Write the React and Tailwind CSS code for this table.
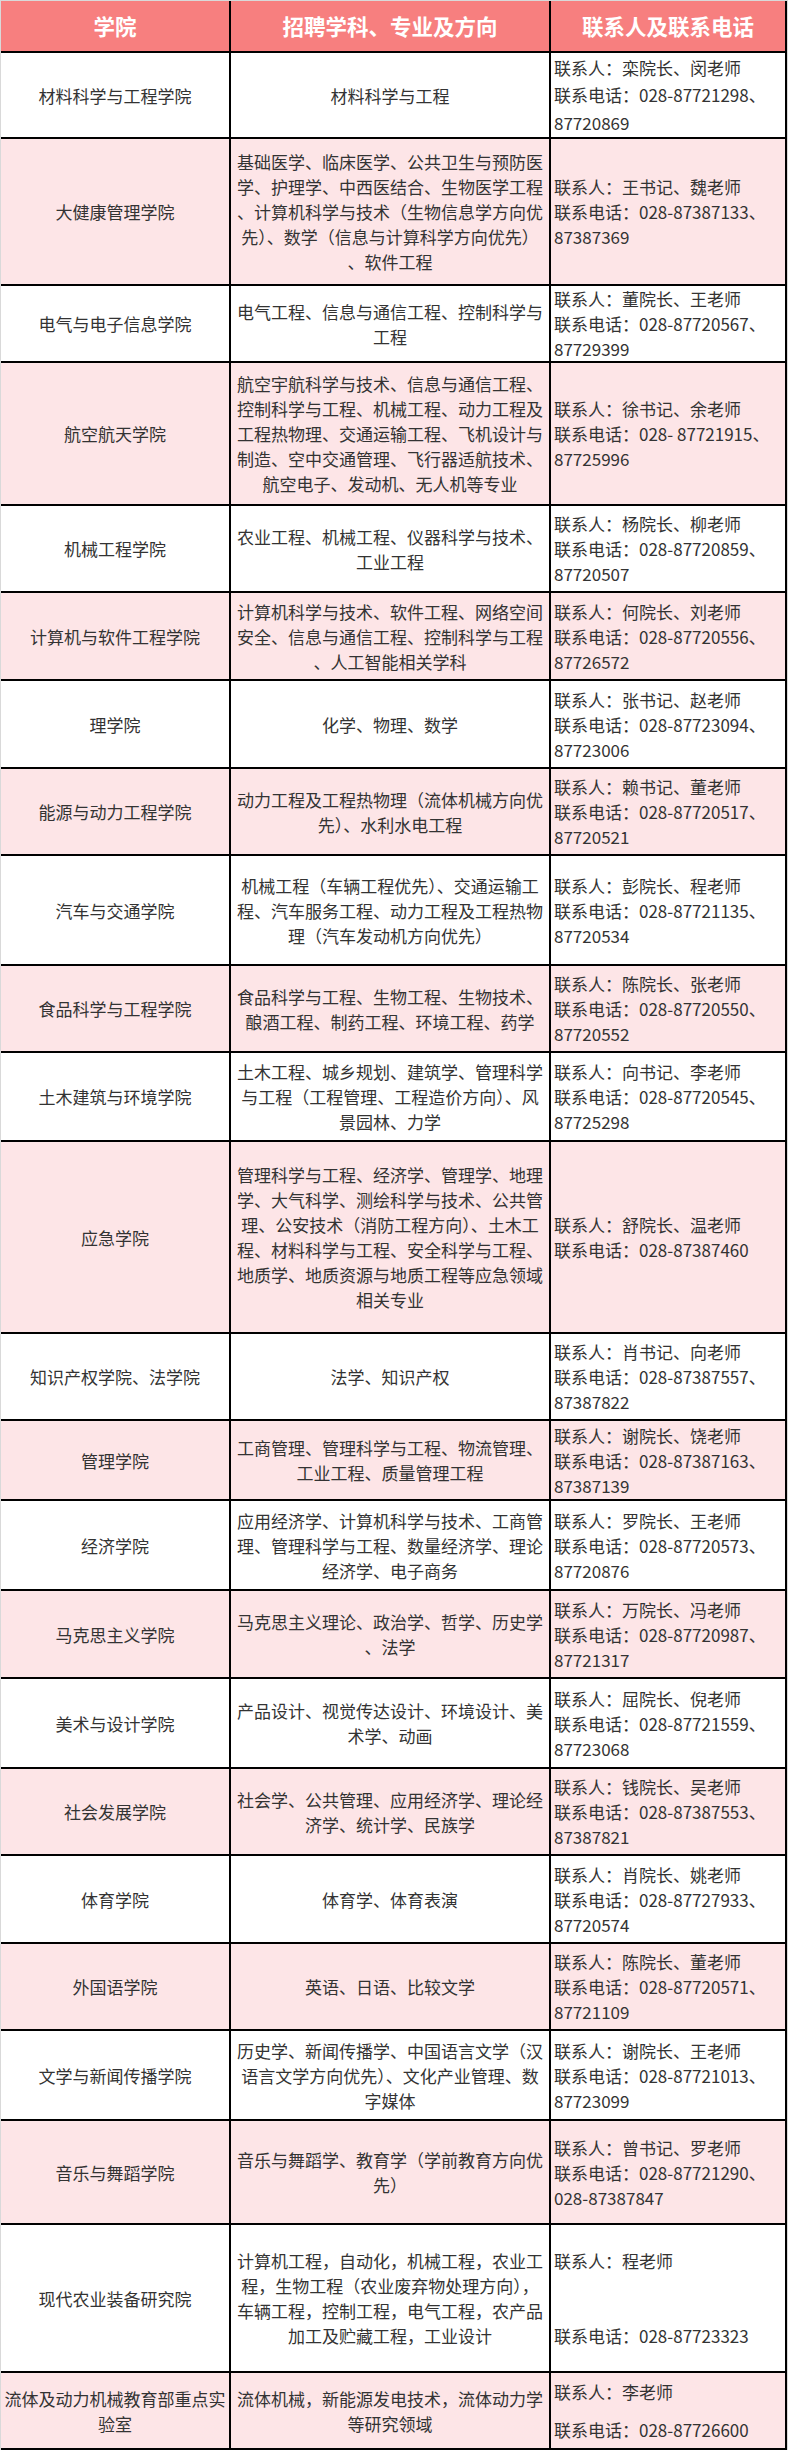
import React from 'react';

const rows = [
    { h: 'h-[86px]', name: ['材料科学与工程学院'], majors: ['材料科学与工程'], contact: ['联系人：栾院长、闵老师', '联系电话：028-87721298、', '87720869'], lead: 'leading-[27.5px]' },
    { h: 'h-[147px]', name: ['大健康管理学院'], majors: ['基础医学、临床医学、公共卫生与预防医', '学、护理学、中西医结合、生物医学工程', '、计算机科学与技术（生物信息学方向优', '先）、数学（信息与计算科学方向优先）', '、软件工程'], contact: ['联系人：王书记、魏老师', '联系电话：028-87387133、', '87387369'] },
    { h: 'h-[77px]', name: ['电气与电子信息学院'], majors: ['电气工程、信息与通信工程、控制科学与', '工程'], contact: ['联系人：董院长、王老师', '联系电话：028-87720567、', '87729399'] },
    { h: 'h-[143px]', name: ['航空航天学院'], majors: ['航空宇航科学与技术、信息与通信工程、', '控制科学与工程、机械工程、动力工程及', '工程热物理、交通运输工程、飞机设计与', '制造、空中交通管理、飞行器适航技术、', '航空电子、发动机、无人机等专业'], contact: ['联系人：徐书记、余老师', '联系电话：028- 87721915、', '87725996'] },
    { h: 'h-[87px]', name: ['机械工程学院'], majors: ['农业工程、机械工程、仪器科学与技术、', '工业工程'], contact: ['联系人：杨院长、柳老师', '联系电话：028-87720859、', '87720507'] },
    { h: 'h-[88px]', name: ['计算机与软件工程学院'], majors: ['计算机科学与技术、软件工程、网络空间', '安全、信息与通信工程、控制科学与工程', '、人工智能相关学科'], contact: ['联系人：何院长、刘老师', '联系电话：028-87720556、', '87726572'] },
    { h: 'h-[88px]', name: ['理学院'], majors: ['化学、物理、数学'], contact: ['联系人：张书记、赵老师', '联系电话：028-87723094、', '87723006'] },
    { h: 'h-[87px]', name: ['能源与动力工程学院'], majors: ['动力工程及工程热物理（流体机械方向优', '先）、水利水电工程'], contact: ['联系人：赖书记、董老师', '联系电话：028-87720517、', '87720521'] },
    { h: 'h-[110px]', name: ['汽车与交通学院'], majors: ['机械工程（车辆工程优先）、交通运输工', '程、汽车服务工程、动力工程及工程热物', '理（汽车发动机方向优先）'], contact: ['联系人：彭院长、程老师', '联系电话：028-87721135、', '87720534'] },
    { h: 'h-[87px]', name: ['食品科学与工程学院'], majors: ['食品科学与工程、生物工程、生物技术、', '酿酒工程、制药工程、环境工程、药学'], contact: ['联系人：陈院长、张老师', '联系电话：028-87720550、', '87720552'] },
    { h: 'h-[89px]', name: ['土木建筑与环境学院'], majors: ['土木工程、城乡规划、建筑学、管理科学', '与工程（工程管理、工程造价方向）、风', '景园林、力学'], contact: ['联系人：向书记、李老师', '联系电话：028-87720545、', '87725298'] },
    { h: 'h-[192px]', name: ['应急学院'], majors: ['管理科学与工程、经济学、管理学、地理', '学、大气科学、测绘科学与技术、公共管', '理、公安技术（消防工程方向）、土木工', '程、材料科学与工程、安全科学与工程、', '地质学、地质资源与地质工程等应急领域', '相关专业'], contact: ['联系人：舒院长、温老师', '联系电话：028-87387460'] },
    { h: 'h-[87px]', name: ['知识产权学院、法学院'], majors: ['法学、知识产权'], contact: ['联系人：肖书记、向老师', '联系电话：028-87387557、', '87387822'] },
    { h: 'h-[80px]', name: ['管理学院'], majors: ['工商管理、管理科学与工程、物流管理、', '工业工程、质量管理工程'], contact: ['联系人：谢院长、饶老师', '联系电话：028-87387163、', '87387139'] },
    { h: 'h-[90px]', name: ['经济学院'], majors: ['应用经济学、计算机科学与技术、工商管', '理、管理科学与工程、数量经济学、理论', '经济学、电子商务'], contact: ['联系人：罗院长、王老师', '联系电话：028-87720573、', '87720876'] },
    { h: 'h-[88px]', name: ['马克思主义学院'], majors: ['马克思主义理论、政治学、哲学、历史学', '、法学'], contact: ['联系人：万院长、冯老师', '联系电话：028-87720987、', '87721317'] },
    { h: 'h-[90px]', name: ['美术与设计学院'], majors: ['产品设计、视觉传达设计、环境设计、美', '术学、动画'], contact: ['联系人：屈院长、倪老师', '联系电话：028-87721559、', '87723068'] },
    { h: 'h-[87px]', name: ['社会发展学院'], majors: ['社会学、公共管理、应用经济学、理论经', '济学、统计学、民族学'], contact: ['联系人：钱院长、吴老师', '联系电话：028-87387553、', '87387821'] },
    { h: 'h-[88px]', name: ['体育学院'], majors: ['体育学、体育表演'], contact: ['联系人：肖院长、姚老师', '联系电话：028-87727933、', '87720574'] },
    { h: 'h-[87px]', name: ['外国语学院'], majors: ['英语、日语、比较文学'], contact: ['联系人：陈院长、董老师', '联系电话：028-87720571、', '87721109'] },
    { h: 'h-[90px]', name: ['文学与新闻传播学院'], majors: ['历史学、新闻传播学、中国语言文学（汉', '语言文学方向优先）、文化产业管理、数', '字媒体'], contact: ['联系人：谢院长、王老师', '联系电话：028-87721013、', '87723099'] },
    { h: 'h-[104px]', name: ['音乐与舞蹈学院'], majors: ['音乐与舞蹈学、教育学（学前教育方向优', '先）'], contact: ['联系人：曾书记、罗老师', '联系电话：028-87721290、', '028-87387847'] },
    { h: 'h-[148px]', name: ['现代农业装备研究院'], majors: ['计算机工程，自动化，机械工程，农业工', '程，生物工程（农业废弃物处理方向），', '车辆工程，控制工程，电气工程，农产品', '加工及贮藏工程，工业设计'], contact: ['联系人：程老师', '', '', '联系电话：028-87723323'] },
    { h: 'h-[77px]', name: ['流体及动力机械教育部重点实', '验室'], majors: ['流体机械，新能源发电技术，流体动力学', '等研究领域'], contact: ['联系人：李老师', '联系电话：028-87726600'], gap: 'gap-[13px]' },
];

const Lines = ({ items, className }) =>
    items.map((t, i) => (
        <div key={i} className={`whitespace-nowrap ${className}`}>
            {t === '' ? '\u00a0' : t}
        </div>
    ));

const App = () => {
    return (
        <div className="min-h-screen bg-white" style={{ fontFamily: '"Noto Sans CJK SC", "Noto Sans", sans-serif' }}>
            <div className="w-[788px] border-x border-t border-[#d9d9d9] text-[17px] text-[#333]">
                {/* header */}
                <div className="flex h-[52px] border-b-2 border-black bg-[#f77f7f] text-[21.5px] font-bold text-white">
                    <div className="flex w-[230px] items-center justify-center border-r-2 border-black">学院</div>
                    <div className="flex w-[320px] items-center justify-center border-r-2 border-black">招聘学科、专业及方向</div>
                    <div className="flex w-[236px] items-center justify-center border-r-2 border-black">联系人及联系电话</div>
                </div>

                {rows.map((r, i) => (
                    <div key={i} className={`flex border-b-2 border-black ${r.h} ${i % 2 === 1 ? 'bg-[#fde5e7]' : 'bg-white'}`}>
                        <div className="flex w-[230px] flex-col items-center justify-center border-r-2 border-black px-[3px] text-center leading-[25px]">
                            <Lines items={r.name} />
                        </div>
                        <div className="flex w-[320px] flex-col items-center justify-center border-r-2 border-black text-center leading-[25px]">
                            <Lines items={r.majors} />
                        </div>
                        <div className={`flex w-[236px] flex-col justify-center border-r-2 border-black pl-[3px] ${r.lead || 'leading-[25px]'} ${r.gap || ''}`}>
                            <Lines items={r.contact} />
                        </div>
                    </div>
                ))}
            </div>
        </div>
    );
};

export default App;
